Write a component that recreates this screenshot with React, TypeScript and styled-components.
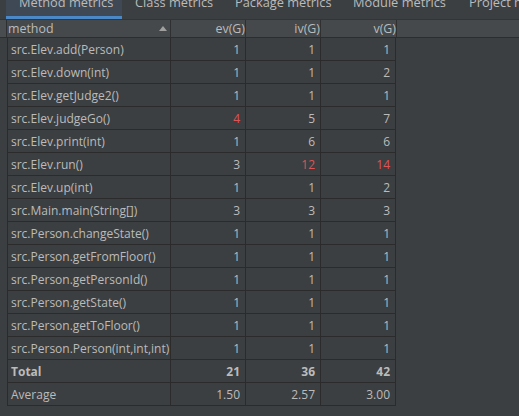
import React, { FC } from 'react';
import styled, { createGlobalStyle } from 'styled-components';

const GlobalStyle = createGlobalStyle`
  html, body {
    margin: 0;
    padding: 0;
    background: #3c3f41;
  }
  body {
    font-family: 'Open Sans', 'Noto Sans', sans-serif;
    font-size: 12px;
    color: #bbbbbb;
  }
`;

const Page = styled.div`
  width: 519px;
  height: 416px;
  overflow: hidden;
  background: #3c3f41;
  display: flex;
  flex-direction: column;
`;

const TabBar = styled.div`
  display: flex;
  height: 19px;
  padding-left: 6px;
  flex-shrink: 0;
`;

const Tab = styled.div<{ $active?: boolean; $w: number }>`
  box-sizing: border-box;
  flex-shrink: 0;
  width: ${(p) => p.$w}px;
  height: 19px;
  padding-left: 13px;
  overflow: hidden;
  white-space: nowrap;
  background: ${(p) => (p.$active ? '#3f4955' : 'transparent')};
  border-bottom: 3px solid ${(p) => (p.$active ? '#4a88c7' : 'transparent')};
  & span {
    display: block;
    line-height: 16px;
    margin-top: -6px;
    font-size: 12.8px;
  }
`;

const HeaderBar = styled.div`
  display: flex;
  height: 17px;
  background: #45494b;
  border-top: 1px solid #323435;
  border-bottom: 1px solid #2b2d2e;
  flex-shrink: 0;
`;

const Corner = styled.div`
  width: 6px;
  border-right: 1px solid #2e3031;
  background: #4a4d4f;
`;

const HeadCell = styled.div<{ $w: number; $left?: boolean }>`
  width: ${(p) => p.$w}px;
  border-right: 1px solid #2e3031;
  display: flex;
  align-items: center;
  justify-content: ${(p) => (p.$left ? 'space-between' : 'flex-end')};
  line-height: 17px;
  font-size: 12.4px;
  white-space: nowrap;
  padding-left: ${(p) => (p.$left ? '1px' : '0')};
`;

const SortArrow = styled.span`
  width: 0;
  height: 0;
  margin-right: 3px;
  border-left: 4px solid transparent;
  border-right: 4px solid transparent;
  border-bottom: 5px solid #a0a0a0;
`;

const Grid = styled.div`
  margin-left: 7px;
  width: 389px;
  display: grid;
  grid-template-columns: 162px 74px 74px 74px;
  grid-auto-rows: 22px;
  gap: 1px;
  background: #2b2b2b;
  border: 1px solid #2b2b2b;
  border-top: none;
  box-sizing: border-box;
`;

const Cell = styled.div<{ $num?: boolean; $bold?: boolean; $red?: boolean }>`
  background: #3c3f41;
  display: flex;
  align-items: center;
  justify-content: ${(p) => (p.$num ? 'flex-end' : 'flex-start')};
  padding: ${(p) => (p.$num ? '0 5px 0 0' : '0 0 0 3px')};
  white-space: nowrap;
  overflow: hidden;
  font-size: 12px;
  font-weight: ${(p) => (p.$bold ? 700 : 400)};
  color: ${(p) => (p.$red ? '#de5454' : '#bbbbbb')};
`;

type Row = [string, string, string, string];

const rows: Row[] = [
  ['src.Elev.add(Person)', '1', '1', '1'],
  ['src.Elev.down(int)', '1', '1', '2'],
  ['src.Elev.getJudge2()', '1', '1', '1'],
  ['src.Elev.judgeGo()', '4', '5', '7'],
  ['src.Elev.print(int)', '1', '6', '6'],
  ['src.Elev.run()', '3', '12', '14'],
  ['src.Elev.up(int)', '1', '1', '2'],
  ['src.Main.main(String[])', '3', '3', '3'],
  ['src.Person.changeState()', '1', '1', '1'],
  ['src.Person.getFromFloor()', '1', '1', '1'],
  ['src.Person.getPersonId()', '1', '1', '1'],
  ['src.Person.getState()', '1', '1', '1'],
  ['src.Person.getToFloor()', '1', '1', '1'],
  ['src.Person.Person(int,int,int)', '1', '1', '1'],
];

// limits above which a metric is flagged red
const limits = [3, 10, 10];

const tabs = [
  { name: 'Method metrics', w: 116 },
  { name: 'Class metrics', w: 100 },
  { name: 'Package metrics', w: 118 },
  { name: 'Module metrics', w: 116 },
  { name: 'Project metrics', w: 120 },
];

const App: FC = () => {
  return (
    <Page>
      <GlobalStyle />
      <TabBar>
        {tabs.map((t, i) => (
          <Tab key={t.name} $w={t.w} $active={i === 0}>
            <span>{t.name}</span>
          </Tab>
        ))}
      </TabBar>
      <HeaderBar>
        <Corner />
        <HeadCell $w={162} $left>
          method
          <SortArrow />
        </HeadCell>
        <HeadCell $w={74}>ev(G)</HeadCell>
        <HeadCell $w={74}>iv(G)</HeadCell>
        <HeadCell $w={75}>v(G)</HeadCell>
      </HeaderBar>
      <Grid>
        {rows.map((r) => (
          <React.Fragment key={r[0]}>
            <Cell>{r[0]}</Cell>
            {r.slice(1).map((v, i) => (
              <Cell key={i} $num $red={Number(v) > limits[i]}>
                {v}
              </Cell>
            ))}
          </React.Fragment>
        ))}
        <Cell $bold>Total</Cell>
        <Cell $num $bold>21</Cell>
        <Cell $num $bold>36</Cell>
        <Cell $num $bold>42</Cell>
        <Cell>Average</Cell>
        <Cell $num>1.50</Cell>
        <Cell $num>2.57</Cell>
        <Cell $num>3.00</Cell>
      </Grid>
    </Page>
  );
};

export default App;
